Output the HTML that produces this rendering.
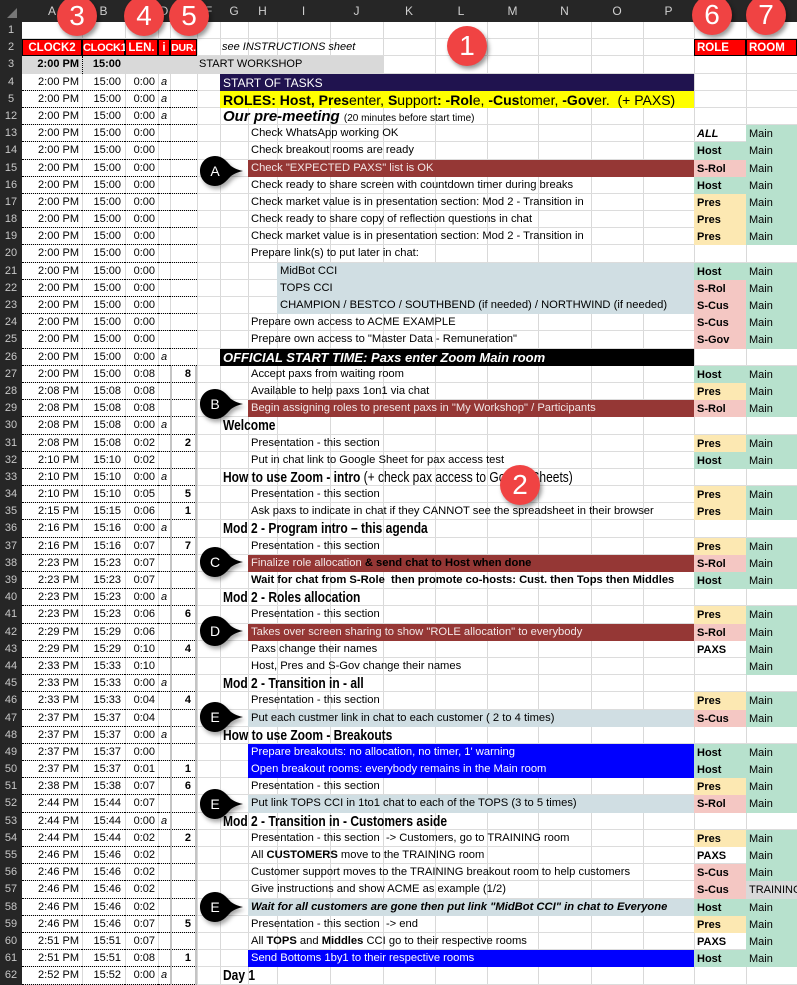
<!DOCTYPE html>
<html><head><meta charset="utf-8"><style>
*{margin:0;padding:0;box-sizing:border-box}
body{width:797px;height:985px;overflow:hidden;background:#fff;font-family:"Liberation Sans",Arial,sans-serif;font-size:11px;color:#000;position:relative}
.hdr{position:absolute;left:0;top:0;width:797px;height:22px;background:#262626;color:#cfcfcf;font-size:12px}
.hdr span{position:absolute;top:4px;text-align:center}
.vl{position:absolute;top:22px;height:963px;width:1px;background:#d9d9d9}
.rows{position:absolute;left:0;top:22px;width:797px}
.r{position:relative;height:17.2px;border-bottom:1px solid #dcdcdc}
.r span{position:absolute;top:0;height:17.2px;line-height:17px;white-space:nowrap;overflow:visible}
.n{left:0;width:22px;background:#262626;color:#c8c8c8;text-align:center;font-size:11px}
.a{left:22px;width:60px;text-align:right;padding-right:3px;border-bottom:1px dotted #000}
.b{left:82px;width:43px;text-align:right;padding-right:4px;border-bottom:1px dotted #000}
.c{left:125px;width:33px;text-align:right;padding-right:3px;border-bottom:1px dotted #000}
.d{left:158px;width:12px;text-align:center;font-style:italic;border-bottom:1px dotted #000}
.e{left:170px;width:27px;text-align:right;padding-right:4px;font-weight:bold;border-bottom:1px dotted #000}
.eb{border-left:2px solid #c4c4c4;border-right:2px solid #c4c4c4}
.t{left:248px;width:446px;padding-left:3px;font-size:11.2px}
.ti{left:277px;width:417px;padding-left:3px;background:#d0dee3;font-size:11.2px}
.s{left:220px;width:474px;padding-left:3px;font-weight:bold;font-size:14.5px;line-height:18px!important}
.sc{display:inline-block;transform:scaleX(0.8);transform-origin:0 50%;font-size:15px}
.ro{left:694px;width:52px;padding-left:3px;font-weight:bold;line-height:19px!important}
.rm{left:746px;width:51px;padding-left:3px;line-height:19px!important}
.g{background:#b7e1cd}.y{background:#fce8b2}.p{background:#f4c7c3}.gr{background:#d9d9d9}
.dr{background:#953735;color:#f3e6e6}
.bl{background:#0000ff;color:#fff}
.lb{background:#d0dee3}
.red{background:#f00;color:#fff;font-weight:bold;font-size:11.5px;border:1px solid #000}
.circ{position:absolute;width:40px;height:40px;border-radius:50%;background:#f04343;color:#fff;font-size:28px;text-align:center;line-height:40px;box-shadow:2px 3px 4px rgba(0,0,0,.4)}
.call{position:absolute;width:56px;height:34px;filter:drop-shadow(2px 3px 2px rgba(0,0,0,.35))}
</style></head><body>
<div class="hdr">
<span style="left:0;width:22px;top:0"><svg width="22" height="22"><polygon points="17,8 17,18 7,18" fill="#777"/></svg></span>
<span style="left:22px;width:60px">A</span><span style="left:82px;width:43px">B</span><span style="left:125px;width:33px">C</span><span style="left:158px;width:12px">D</span><span style="left:170px;width:27px">E</span><span style="left:197px;width:23px">F</span><span style="left:220px;width:28px">G</span><span style="left:248px;width:29px">H</span><span style="left:277px;width:53px">I</span><span style="left:330px;width:53px">J</span><span style="left:383px;width:52px">K</span><span style="left:435px;width:52px">L</span><span style="left:487px;width:51px">M</span><span style="left:538px;width:53px">N</span><span style="left:591px;width:52px">O</span><span style="left:643px;width:51px">P</span><span style="left:694px;width:52px">Q</span><span style="left:746px;width:51px">R</span>
</div>
<div class="vl" style="left:82px"></div><div class="vl" style="left:125px"></div><div class="vl" style="left:158px"></div><div class="vl" style="left:170px"></div><div class="vl" style="left:197px"></div><div class="vl" style="left:220px"></div><div class="vl" style="left:248px"></div><div class="vl" style="left:277px"></div><div class="vl" style="left:330px"></div><div class="vl" style="left:383px"></div><div class="vl" style="left:435px"></div><div class="vl" style="left:487px"></div><div class="vl" style="left:538px"></div><div class="vl" style="left:591px"></div><div class="vl" style="left:643px"></div><div class="vl" style="left:694px"></div><div class="vl" style="left:746px"></div>
<div class="rows">
<div class="r"><span class="n">1</span></div>
<div class="r"><span class="n">2</span><span class="red" style="left:22px;width:60px;text-align:center">CLOCK2</span><span class="red" style="left:82px;width:43px;text-align:center;font-size:11px;letter-spacing:-0.3px">CLOCK1</span><span class="red" style="left:125px;width:33px;text-align:center">LEN.</span><span class="red" style="left:158px;width:12px;text-align:center">i</span><span class="red" style="left:170px;width:27px;text-align:center;font-size:10.5px;letter-spacing:-0.3px">DUR.</span><span style="left:222px;font-style:italic">see INSTRUCTIONS sheet</span><span class="red" style="left:694px;width:52px;padding-left:2px">ROLE</span><span class="red" style="left:746px;width:51px;padding-left:2px">ROOM</span></div>
<div class="r"><span class="n">3</span><span class="gr" style="left:22px;width:361px"></span><span class="a" style="font-weight:bold;border:0">2:00 PM</span><span class="b" style="font-weight:bold;border:0;border-left:1px dotted #000">15:00</span><span style="left:199px">START WORKSHOP</span></div>
<div class="r"><span class="n">4</span><span class="a">2:00 PM</span><span class="b">15:00</span><span class="c">0:00</span><span class="d">a</span><span class="e"></span><span class="s" style="background:#20134f;color:#fff;font-weight:normal;font-size:12px">START OF TASKS</span></div>
<div class="r"><span class="n">5</span><span class="a">2:00 PM</span><span class="b">15:00</span><span class="c">0:00</span><span class="d">a</span><span class="e"></span><span class="s" style="background:#ff0;font-weight:normal;font-size:14px"><b>ROLES: Host, Pres</b>enter, <b>S</b>upport<b>: -Rol</b>e, <b>-Cus</b>tomer, <b>-Gov</b>er.&nbsp; (+ PAXS)</span></div>
<div class="r"><span class="n">12</span><span class="a">2:00 PM</span><span class="b">15:00</span><span class="c">0:00</span><span class="d">a</span><span class="e"></span><span class="s" style="font-style:italic;font-size:15px">Our pre-meeting <span style="position:static;font-style:normal;font-weight:normal;font-size:10px">(20 minutes before start time)</span></span></div>
<div class="r"><span class="n">13</span><span class="a">2:00 PM</span><span class="b">15:00</span><span class="c">0:00</span><span class="d"></span><span class="e"></span><span class="t">Check WhatsApp working OK</span><span class="ro" style="font-style:italic">ALL</span><span class="rm g">Main</span></div>
<div class="r"><span class="n">14</span><span class="a">2:00 PM</span><span class="b">15:00</span><span class="c">0:00</span><span class="d"></span><span class="e"></span><span class="t">Check breakout rooms are ready</span><span class="ro g">Host</span><span class="rm g">Main</span></div>
<div class="r"><span class="n">15</span><span class="a">2:00 PM</span><span class="b">15:00</span><span class="c">0:00</span><span class="d"></span><span class="e"></span><span class="t dr">Check "EXPECTED PAXS" list is OK</span><span class="ro p">S-Rol</span><span class="rm g">Main</span></div>
<div class="r"><span class="n">16</span><span class="a">2:00 PM</span><span class="b">15:00</span><span class="c">0:00</span><span class="d"></span><span class="e"></span><span class="t">Check ready to share screen with countdown timer during breaks</span><span class="ro g">Host</span><span class="rm g">Main</span></div>
<div class="r"><span class="n">17</span><span class="a">2:00 PM</span><span class="b">15:00</span><span class="c">0:00</span><span class="d"></span><span class="e"></span><span class="t">Check market value is in presentation section: Mod 2 - Transition in</span><span class="ro y">Pres</span><span class="rm g">Main</span></div>
<div class="r"><span class="n">18</span><span class="a">2:00 PM</span><span class="b">15:00</span><span class="c">0:00</span><span class="d"></span><span class="e"></span><span class="t">Check ready to share copy of reflection questions in chat</span><span class="ro y">Pres</span><span class="rm g">Main</span></div>
<div class="r"><span class="n">19</span><span class="a">2:00 PM</span><span class="b">15:00</span><span class="c">0:00</span><span class="d"></span><span class="e"></span><span class="t">Check market value is in presentation section: Mod 2 - Transition in</span><span class="ro y">Pres</span><span class="rm g">Main</span></div>
<div class="r"><span class="n">20</span><span class="a">2:00 PM</span><span class="b">15:00</span><span class="c">0:00</span><span class="d"></span><span class="e"></span><span class="t">Prepare link(s) to put later in chat:</span></div>
<div class="r"><span class="n">21</span><span class="a">2:00 PM</span><span class="b">15:00</span><span class="c">0:00</span><span class="d"></span><span class="e"></span><span class="ti">MidBot CCI</span><span class="ro g">Host</span><span class="rm g">Main</span></div>
<div class="r"><span class="n">22</span><span class="a">2:00 PM</span><span class="b">15:00</span><span class="c">0:00</span><span class="d"></span><span class="e"></span><span class="ti">TOPS CCI</span><span class="ro p">S-Rol</span><span class="rm g">Main</span></div>
<div class="r"><span class="n">23</span><span class="a">2:00 PM</span><span class="b">15:00</span><span class="c">0:00</span><span class="d"></span><span class="e"></span><span class="ti">CHAMPION / BESTCO / SOUTHBEND (if needed) / NORTHWIND (if needed)</span><span class="ro p">S-Cus</span><span class="rm g">Main</span></div>
<div class="r"><span class="n">24</span><span class="a">2:00 PM</span><span class="b">15:00</span><span class="c">0:00</span><span class="d"></span><span class="e"></span><span class="t">Prepare own access to ACME EXAMPLE</span><span class="ro p">S-Cus</span><span class="rm g">Main</span></div>
<div class="r"><span class="n">25</span><span class="a">2:00 PM</span><span class="b">15:00</span><span class="c">0:00</span><span class="d"></span><span class="e"></span><span class="t">Prepare own access to "Master Data - Remuneration"</span><span class="ro p">S-Gov</span><span class="rm g">Main</span></div>
<div class="r"><span class="n">26</span><span class="a">2:00 PM</span><span class="b">15:00</span><span class="c">0:00</span><span class="d">a</span><span class="e"></span><span class="s" style="background:#000;color:#fff;font-style:italic;font-size:13px">OFFICIAL START TIME: Paxs enter Zoom Main room</span></div>
<div class="r"><span class="n">27</span><span class="a">2:00 PM</span><span class="b">15:00</span><span class="c">0:08</span><span class="d"></span><span class="e eb">8</span><span class="t">Accept paxs from waiting room</span><span class="ro g">Host</span><span class="rm g">Main</span></div>
<div class="r"><span class="n">28</span><span class="a">2:08 PM</span><span class="b">15:08</span><span class="c">0:08</span><span class="d"></span><span class="e eb"></span><span class="t">Available to help paxs 1on1 via chat</span><span class="ro y">Pres</span><span class="rm g">Main</span></div>
<div class="r"><span class="n">29</span><span class="a">2:08 PM</span><span class="b">15:08</span><span class="c">0:08</span><span class="d"></span><span class="e eb"></span><span class="t dr">Begin assigning roles to present paxs in "My Workshop" / Participants</span><span class="ro p">S-Rol</span><span class="rm g">Main</span></div>
<div class="r"><span class="n">30</span><span class="a">2:08 PM</span><span class="b">15:08</span><span class="c">0:00</span><span class="d">a</span><span class="e eb"></span><span class="s"><span class="sc" style="position:static">Welcome</span></span></div>
<div class="r"><span class="n">31</span><span class="a">2:08 PM</span><span class="b">15:08</span><span class="c">0:02</span><span class="d"></span><span class="e eb">2</span><span class="t">Presentation - this section</span><span class="ro y">Pres</span><span class="rm g">Main</span></div>
<div class="r"><span class="n">32</span><span class="a">2:10 PM</span><span class="b">15:10</span><span class="c">0:02</span><span class="d"></span><span class="e eb"></span><span class="t">Put in chat link to Google Sheet for pax access test</span><span class="ro g">Host</span><span class="rm g">Main</span></div>
<div class="r"><span class="n">33</span><span class="a">2:10 PM</span><span class="b">15:10</span><span class="c">0:00</span><span class="d">a</span><span class="e eb"></span><span class="s"><span class="sc" style="position:static">How to use Zoom - intro <span style="position:static;font-weight:normal">(+ check pax access to Google Sheets)</span></span></span></div>
<div class="r"><span class="n">34</span><span class="a">2:10 PM</span><span class="b">15:10</span><span class="c">0:05</span><span class="d"></span><span class="e eb">5</span><span class="t">Presentation - this section</span><span class="ro y">Pres</span><span class="rm g">Main</span></div>
<div class="r"><span class="n">35</span><span class="a">2:15 PM</span><span class="b">15:15</span><span class="c">0:06</span><span class="d"></span><span class="e eb">1</span><span class="t">Ask paxs to indicate in chat if they CANNOT see the spreadsheet in their browser</span><span class="ro y">Pres</span><span class="rm g">Main</span></div>
<div class="r"><span class="n">36</span><span class="a">2:16 PM</span><span class="b">15:16</span><span class="c">0:00</span><span class="d">a</span><span class="e eb"></span><span class="s"><span class="sc" style="position:static">Mod 2 - Program intro – this agenda</span></span></div>
<div class="r"><span class="n">37</span><span class="a">2:16 PM</span><span class="b">15:16</span><span class="c">0:07</span><span class="d"></span><span class="e eb">7</span><span class="t">Presentation - this section</span><span class="ro y">Pres</span><span class="rm g">Main</span></div>
<div class="r"><span class="n">38</span><span class="a">2:23 PM</span><span class="b">15:23</span><span class="c">0:07</span><span class="d"></span><span class="e eb"></span><span class="t dr">Finalize role allocation <b style="color:#000">&amp; send chat to Host when done</b></span><span class="ro p">S-Rol</span><span class="rm g">Main</span></div>
<div class="r"><span class="n">39</span><span class="a">2:23 PM</span><span class="b">15:23</span><span class="c">0:07</span><span class="d"></span><span class="e eb"></span><span class="t" style="font-weight:bold">Wait for chat from S-Role&nbsp; then promote co-hosts: Cust. then Tops then Middles</span><span class="ro g">Host</span><span class="rm g">Main</span></div>
<div class="r"><span class="n">40</span><span class="a">2:23 PM</span><span class="b">15:23</span><span class="c">0:00</span><span class="d">a</span><span class="e eb"></span><span class="s"><span class="sc" style="position:static">Mod 2 - Roles allocation</span></span></div>
<div class="r"><span class="n">41</span><span class="a">2:23 PM</span><span class="b">15:23</span><span class="c">0:06</span><span class="d"></span><span class="e eb">6</span><span class="t">Presentation - this section</span><span class="ro y">Pres</span><span class="rm g">Main</span></div>
<div class="r"><span class="n">42</span><span class="a">2:29 PM</span><span class="b">15:29</span><span class="c">0:06</span><span class="d"></span><span class="e eb"></span><span class="t dr">Takes over screen sharing to show "ROLE allocation" to everybody</span><span class="ro p">S-Rol</span><span class="rm g">Main</span></div>
<div class="r"><span class="n">43</span><span class="a">2:29 PM</span><span class="b">15:29</span><span class="c">0:10</span><span class="d"></span><span class="e eb">4</span><span class="t">Paxs change their names</span><span class="ro">PAXS</span><span class="rm g">Main</span></div>
<div class="r"><span class="n">44</span><span class="a">2:33 PM</span><span class="b">15:33</span><span class="c">0:10</span><span class="d"></span><span class="e eb"></span><span class="t">Host, Pres and S-Gov change their names</span><span class="rm g">Main</span></div>
<div class="r"><span class="n">45</span><span class="a">2:33 PM</span><span class="b">15:33</span><span class="c">0:00</span><span class="d">a</span><span class="e eb"></span><span class="s"><span class="sc" style="position:static">Mod 2 - Transition in - all</span></span></div>
<div class="r"><span class="n">46</span><span class="a">2:33 PM</span><span class="b">15:33</span><span class="c">0:04</span><span class="d"></span><span class="e eb">4</span><span class="t">Presentation - this section</span><span class="ro y">Pres</span><span class="rm g">Main</span></div>
<div class="r"><span class="n">47</span><span class="a">2:37 PM</span><span class="b">15:37</span><span class="c">0:04</span><span class="d"></span><span class="e eb"></span><span class="t lb">Put each custmer link in chat to each customer ( 2 to 4 times)</span><span class="ro p">S-Cus</span><span class="rm g">Main</span></div>
<div class="r"><span class="n">48</span><span class="a">2:37 PM</span><span class="b">15:37</span><span class="c">0:00</span><span class="d">a</span><span class="e eb"></span><span class="s"><span class="sc" style="position:static">How to use Zoom - Breakouts</span></span></div>
<div class="r"><span class="n">49</span><span class="a">2:37 PM</span><span class="b">15:37</span><span class="c">0:00</span><span class="d"></span><span class="e eb"></span><span class="t bl">Prepare breakouts: no allocation, no timer, 1' warning</span><span class="ro g">Host</span><span class="rm g">Main</span></div>
<div class="r"><span class="n">50</span><span class="a">2:37 PM</span><span class="b">15:37</span><span class="c">0:01</span><span class="d"></span><span class="e eb">1</span><span class="t bl">Open breakout rooms: everybody remains in the Main room</span><span class="ro g">Host</span><span class="rm g">Main</span></div>
<div class="r"><span class="n">51</span><span class="a">2:38 PM</span><span class="b">15:38</span><span class="c">0:07</span><span class="d"></span><span class="e eb">6</span><span class="t">Presentation - this section</span><span class="ro y">Pres</span><span class="rm g">Main</span></div>
<div class="r"><span class="n">52</span><span class="a">2:44 PM</span><span class="b">15:44</span><span class="c">0:07</span><span class="d"></span><span class="e eb"></span><span class="t lb">Put link TOPS CCI in 1to1 chat to each of the TOPS (3 to 5 times)</span><span class="ro p">S-Rol</span><span class="rm g">Main</span></div>
<div class="r"><span class="n">53</span><span class="a">2:44 PM</span><span class="b">15:44</span><span class="c">0:00</span><span class="d">a</span><span class="e eb"></span><span class="s"><span class="sc" style="position:static">Mod 2 - Transition in - Customers aside</span></span></div>
<div class="r"><span class="n">54</span><span class="a">2:44 PM</span><span class="b">15:44</span><span class="c">0:02</span><span class="d"></span><span class="e eb">2</span><span class="t">Presentation - this section&nbsp; -&gt; Customers, go to TRAINING room</span><span class="ro y">Pres</span><span class="rm g">Main</span></div>
<div class="r"><span class="n">55</span><span class="a">2:46 PM</span><span class="b">15:46</span><span class="c">0:02</span><span class="d"></span><span class="e eb"></span><span class="t">All <b>CUSTOMERS</b> move to the TRAINING room</span><span class="ro">PAXS</span><span class="rm g">Main</span></div>
<div class="r"><span class="n">56</span><span class="a">2:46 PM</span><span class="b">15:46</span><span class="c">0:02</span><span class="d"></span><span class="e eb"></span><span class="t">Customer support moves to the TRAINING breakout room to help customers</span><span class="ro p">S-Cus</span><span class="rm g">Main</span></div>
<div class="r"><span class="n">57</span><span class="a">2:46 PM</span><span class="b">15:46</span><span class="c">0:02</span><span class="d"></span><span class="e eb"></span><span class="t">Give instructions and show ACME as example (1/2)</span><span class="ro p">S-Cus</span><span class="rm gr" style="overflow:hidden">TRAINING</span></div>
<div class="r"><span class="n">58</span><span class="a">2:46 PM</span><span class="b">15:46</span><span class="c">0:02</span><span class="d"></span><span class="e eb"></span><span class="t lb" style="font-weight:bold;font-style:italic">Wait for all customers are gone then put link "MidBot CCI" in chat to Everyone</span><span class="ro g">Host</span><span class="rm g">Main</span></div>
<div class="r"><span class="n">59</span><span class="a">2:46 PM</span><span class="b">15:46</span><span class="c">0:07</span><span class="d"></span><span class="e eb">5</span><span class="t">Presentation - this section&nbsp; -&gt; end</span><span class="ro y">Pres</span><span class="rm g">Main</span></div>
<div class="r"><span class="n">60</span><span class="a">2:51 PM</span><span class="b">15:51</span><span class="c">0:07</span><span class="d"></span><span class="e eb"></span><span class="t">All <b>TOPS</b> and <b>Middles</b> CCI go to their respective rooms</span><span class="ro">PAXS</span><span class="rm g">Main</span></div>
<div class="r"><span class="n">61</span><span class="a">2:51 PM</span><span class="b">15:51</span><span class="c">0:08</span><span class="d"></span><span class="e eb">1</span><span class="t bl">Send Bottoms 1by1 to their respective rooms</span><span class="ro g">Host</span><span class="rm g">Main</span></div>
<div class="r"><span class="n">62</span><span class="a">2:52 PM</span><span class="b">15:52</span><span class="c">0:00</span><span class="d">a</span><span class="e eb"></span><span class="s"><span class="sc" style="position:static">Day 1</span></span></div>
</div>
<div class="circ" style="left:57px;top:-4px">3</div>
<div class="circ" style="left:124px;top:-4px">4</div>
<div class="circ" style="left:169px;top:-4px">5</div>
<div class="circ" style="left:447px;top:26px">1</div>
<div class="circ" style="left:500px;top:465px">2</div>
<div class="circ" style="left:692px;top:-5px">6</div>
<div class="circ" style="left:746px;top:-5px">7</div>
<svg class="call" style="left:199px;top:154px" viewBox="0 0 56 34"><path d="M16 2 C7 2 1 9 1 17 C1 25 7 32 16 32 C24 32 28 26 32 22 C36 19 40 18 44 17 C40 16 36 15 32 12 C28 8 24 2 16 2Z" fill="#000"/><text x="16" y="22" fill="#fff" font-size="14" text-anchor="middle" font-family="Liberation Sans">A</text></svg>
<svg class="call" style="left:199px;top:387px" viewBox="0 0 56 34"><path d="M16 2 C7 2 1 9 1 17 C1 25 7 32 16 32 C24 32 28 26 32 22 C36 19 40 18 44 17 C40 16 36 15 32 12 C28 8 24 2 16 2Z" fill="#000"/><text x="16" y="22" fill="#fff" font-size="14" text-anchor="middle" font-family="Liberation Sans">B</text></svg>
<svg class="call" style="left:199px;top:545px" viewBox="0 0 56 34"><path d="M16 2 C7 2 1 9 1 17 C1 25 7 32 16 32 C24 32 28 26 32 22 C36 19 40 18 44 17 C40 16 36 15 32 12 C28 8 24 2 16 2Z" fill="#000"/><text x="16" y="22" fill="#fff" font-size="14" text-anchor="middle" font-family="Liberation Sans">C</text></svg>
<svg class="call" style="left:199px;top:614px" viewBox="0 0 56 34"><path d="M16 2 C7 2 1 9 1 17 C1 25 7 32 16 32 C24 32 28 26 32 22 C36 19 40 18 44 17 C40 16 36 15 32 12 C28 8 24 2 16 2Z" fill="#000"/><text x="16" y="22" fill="#fff" font-size="14" text-anchor="middle" font-family="Liberation Sans">D</text></svg>
<svg class="call" style="left:199px;top:700px" viewBox="0 0 56 34"><path d="M16 2 C7 2 1 9 1 17 C1 25 7 32 16 32 C24 32 28 26 32 22 C36 19 40 18 44 17 C40 16 36 15 32 12 C28 8 24 2 16 2Z" fill="#000"/><text x="16" y="22" fill="#fff" font-size="14" text-anchor="middle" font-family="Liberation Sans">E</text></svg>
<svg class="call" style="left:199px;top:787px" viewBox="0 0 56 34"><path d="M16 2 C7 2 1 9 1 17 C1 25 7 32 16 32 C24 32 28 26 32 22 C36 19 40 18 44 17 C40 16 36 15 32 12 C28 8 24 2 16 2Z" fill="#000"/><text x="16" y="22" fill="#fff" font-size="14" text-anchor="middle" font-family="Liberation Sans">E</text></svg>
<svg class="call" style="left:199px;top:890px" viewBox="0 0 56 34"><path d="M16 2 C7 2 1 9 1 17 C1 25 7 32 16 32 C24 32 28 26 32 22 C36 19 40 18 44 17 C40 16 36 15 32 12 C28 8 24 2 16 2Z" fill="#000"/><text x="16" y="22" fill="#fff" font-size="14" text-anchor="middle" font-family="Liberation Sans">E</text></svg>
</body></html>
